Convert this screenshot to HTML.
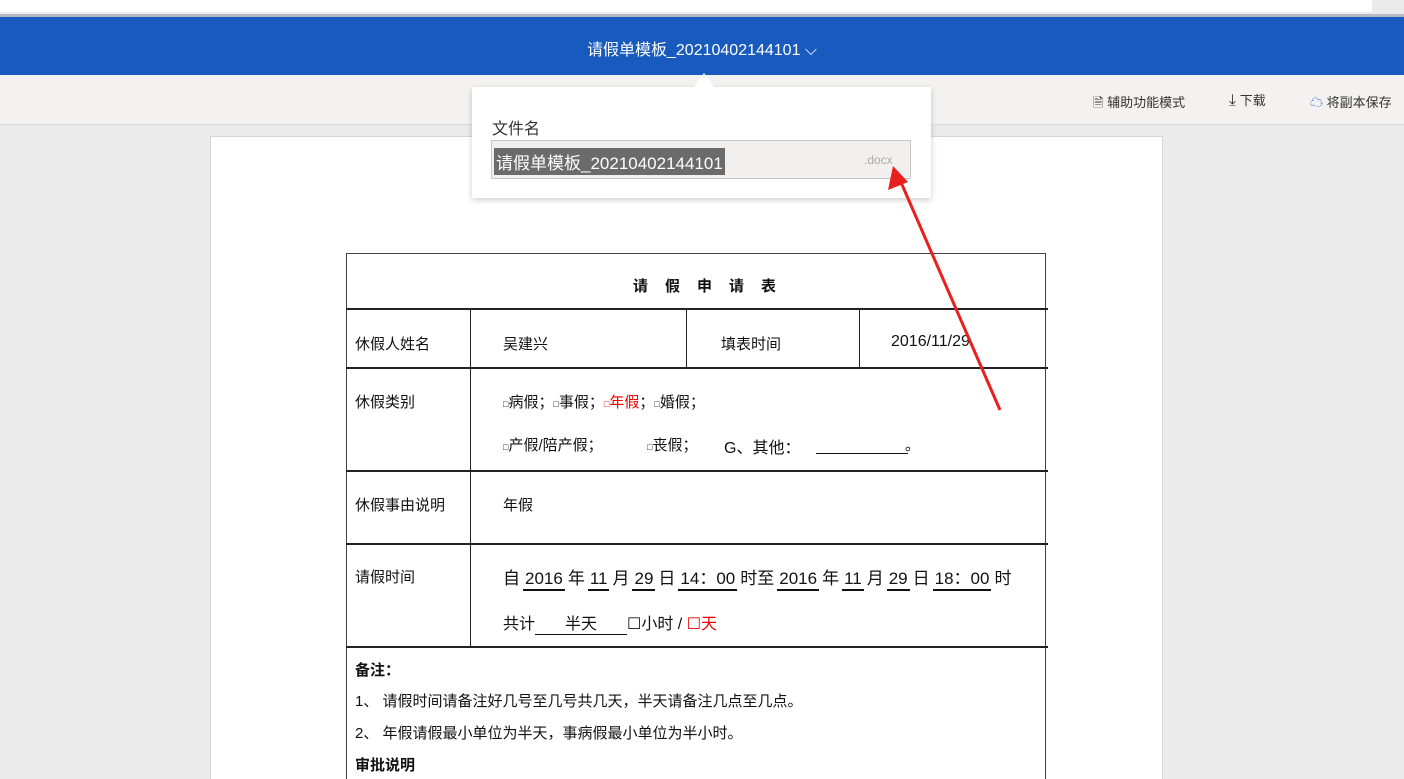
<!DOCTYPE html>
<html><head><meta charset="utf-8"><style>
*{margin:0;padding:0;box-sizing:border-box}
html,body{width:1404px;height:779px;overflow:hidden}
body{background:#ebebeb;font-family:"Liberation Sans","Noto Sans CJK SC",sans-serif;position:relative;color:#222}
.abs{position:absolute}
.t{position:absolute;font-size:15px;white-space:nowrap;color:#111}
.u{border-bottom:2px solid #111;display:inline-block;padding:0 2px;margin:0 3px}
</style></head><body>
<div class="abs" style="left:0;top:0;width:1372px;height:12px;background:#fff"></div>
<div class="abs" style="left:0;top:14px;width:1404px;height:3px;background:#b7b9c4"></div>
<div class="abs" style="left:0;top:17px;width:1404px;height:58px;background:#185abd"></div>
<div class="t" style="left:587px;top:36px;color:#fff;font-size:16px">请假单模板_20210402144101 ⌵</div>
<div class="abs" style="left:0;top:75px;width:1404px;height:50px;background:#f3f2f1;border-bottom:1px solid #ddd"></div>
<div class="t" style="left:1093px;top:92px;font-size:13px;color:#333">🗎 辅助功能模式</div>
<div class="t" style="left:1229px;top:90px;font-size:13px;color:#333"><span style="font-size:16px">⤓</span> 下载</div>
<div class="t" style="left:1310px;top:92px;font-size:13px;color:#333"><span style="color:#1b6ac9">☁</span> 将副本保存</div>
<div class="abs" style="left:210px;top:136px;width:953px;height:660px;background:#fff;border:1px solid #d6d6d6"></div>
<div class="abs" style="left:472px;top:87px;width:459px;height:111px;background:#fff;box-shadow:0 2px 6px rgba(0,0,0,.2)"></div>
<div class="abs" style="left:694px;top:73px;width:0;height:0;border-left:10px solid transparent;border-right:10px solid transparent;border-bottom:14px solid #fff"></div>
<div class="t" style="left:492px;top:115px;font-size:16px;color:#333">文件名</div>
<div class="abs" style="left:491px;top:140px;width:420px;height:39px;border:1px solid #c8c6c4;background:#f1f0ef"></div>
<div class="t" style="left:494px;top:148px;background:#6b6b6b;color:#fff;font-size:17px;padding:1px 2px">请假单模板_20210402144101</div>
<div class="t" style="left:864px;top:153px;font-size:12px;color:#aaa">.docx</div>
<div class="abs" style="left:346px;top:253px;width:700px;height:540px;border:1px solid #444;border-bottom:none"></div>
<div class="abs" style="left:346px;top:308px;width:702px;height:2px;background:#222"></div>
<div class="abs" style="left:346px;top:367px;width:702px;height:2px;background:#222"></div>
<div class="abs" style="left:346px;top:470px;width:702px;height:2px;background:#222"></div>
<div class="abs" style="left:346px;top:543px;width:702px;height:2px;background:#222"></div>
<div class="abs" style="left:346px;top:646px;width:702px;height:2px;background:#222"></div>
<div class="abs" style="left:470px;top:309px;width:1px;height:338px;background:#222"></div>
<div class="abs" style="left:686px;top:309px;width:1px;height:59px;background:#222"></div>
<div class="abs" style="left:859px;top:309px;width:1px;height:59px;background:#222"></div>
<div class="t" style="left:633px;top:275px;font-weight:bold;letter-spacing:17px">请假申请表</div>
<div class="t" style="left:355px;top:333px">休假人姓名</div>
<div class="t" style="left:503px;top:333px">吴建兴</div>
<div class="t" style="left:721px;top:333px">填表时间</div>
<div class="t" style="left:891px;top:333px;font-size:16px">2016/11/29</div>
<div class="t" style="left:355px;top:391px">休假类别</div>
<div class="t" style="left:503px;top:391px"><span style="font-size:9px">□</span>病假；<span style="font-size:9px">□</span>事假；<span style="color:#e00"><span style="font-size:9px">□</span>年假</span>；<span style="font-size:9px">□</span>婚假；</div>
<div class="t" style="left:503px;top:434px"><span style="font-size:9px">□</span>产假/陪产假；</div>
<div class="t" style="left:647px;top:434px"><span style="font-size:9px">□</span>丧假；</div>
<div class="t" style="left:724px;top:434px;font-size:16px">G、其他：</div>
<div class="abs" style="left:816px;top:453px;width:92px;height:1px;background:#111"></div>
<div class="t" style="left:905px;top:434px">。</div>
<div class="t" style="left:355px;top:494px">休假事由说明</div>
<div class="t" style="left:503px;top:494px">年假</div>
<div class="t" style="left:355px;top:566px">请假时间</div>
<div class="t" style="left:503px;top:564px;font-size:17px">自<span class="u">2016</span>年<span class="u">11</span>月<span class="u">29</span>日<span class="u">14：00</span>时至<span class="u">2016</span>年<span class="u">11</span>月<span class="u">29</span>日<span class="u">18：00</span>时</div>
<div class="t" style="left:503px;top:610px;font-size:16px">共计<span style="border-bottom:1px solid #111;display:inline-block;width:92px;text-align:center">半天</span>☐小时 / <span style="color:#e00">☐天</span></div>
<div class="t" style="left:355px;top:659px;font-weight:bold">备注：</div>
<div class="t" style="left:355px;top:690px">1、 请假时间请备注好几号至几号共几天，半天请备注几点至几点。</div>
<div class="t" style="left:355px;top:722px">2、 年假请假最小单位为半天，事病假最小单位为半小时。</div>
<div class="t" style="left:355px;top:754px;font-weight:bold">审批说明</div>
<svg class="abs" style="left:0;top:0" width="1404" height="779"><line x1="1000" y1="410" x2="900" y2="180" stroke="#e8201e" stroke-width="3"/><polygon points="893,166 888,190 908,182" fill="#e8201e"/></svg>
</body></html>
